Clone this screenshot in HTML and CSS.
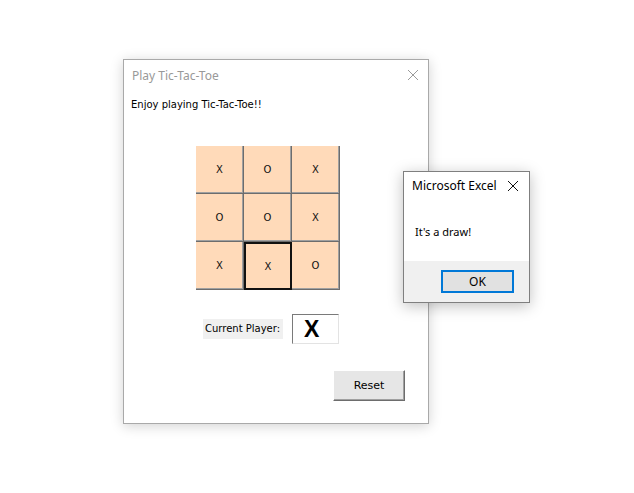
FILE: index.html
```html
<!DOCTYPE html>
<html>
<head>
  <title>Play Tic-Tac-Toe</title>
  <link rel="stylesheet" href="styles.css">
</head>
<body>

  <div class="desktop">

    <div class="window game">
      <div class="titlebar">
        <span class="title">Play Tic-Tac-Toe</span>
        <svg class="close" width="12" height="12" viewBox="0 0 12 12">
          <path d="M1 1 L11 11 M11 1 L1 11" stroke="#9a9a9a" stroke-width="1" fill="none"/>
        </svg>
      </div>

      <div class="content">
        <p class="intro">Enjoy playing Tic-Tac-Toe!!</p>

        <div class="board">
          <div class="cell">X</div>
          <div class="cell">O</div>
          <div class="cell">X</div>
          <div class="cell">O</div>
          <div class="cell">O</div>
          <div class="cell">X</div>
          <div class="cell">X</div>
          <div class="cell focused">X</div>
          <div class="cell">O</div>
        </div>

        <div class="player-row">
          <span class="player-label">Current Player:</span>
          <span class="player-box">X</span>
        </div>

        <div class="actions">
          <button class="btn-reset">Reset</button>
        </div>
      </div>
    </div>

    <div class="window msgbox">
      <div class="titlebar">
        <span class="title">Microsoft Excel</span>
        <svg class="close" width="12" height="12" viewBox="0 0 12 12">
          <path d="M1 1 L11 11 M11 1 L1 11" stroke="#111" stroke-width="1" fill="none"/>
        </svg>
      </div>
      <div class="msg-text">It's a draw!</div>
      <div class="msg-footer">
        <button class="btn-ok">OK</button>
      </div>
    </div>

  </div>

</body>
</html>
```

FILE: styles.css
```css
body {
  margin: 0;
  background: #fff;
  font-family: "Noto Sans", "Open Sans", sans-serif;
}

.desktop {
  position: relative;
  width: 634px;
  height: 493px;
  overflow: hidden;
}

.window {
  position: absolute;
  box-sizing: border-box;
  background: #fff;
  box-shadow: 0 2px 12px rgba(0,0,0,0.18);
}

/* main user form */

.game {
  left: 123px;
  top: 59px;
  width: 306px;
  height: 365px;
  border: 1px solid #a9a9a9;
}

.titlebar {
  display: flex;
  align-items: center;
  justify-content: space-between;
}

.game .titlebar {
  height: 30px;
  padding: 0 9px 0 8px;
}

.game .title {
  font-size: 12px;
  color: #999;
}

.content {
  padding-left: 7px;
}

.intro {
  margin: 8px 0 0;
  font-family: "DejaVu Sans", sans-serif;
  font-size: 10px;
  line-height: 14px;
  color: #000;
}

.board {
  display: grid;
  grid-template-columns: repeat(3, 48px);
  grid-template-rows: repeat(3, 48px);
  margin: 34px 0 0 65px;
  width: 144px;
}

.cell {
  box-sizing: border-box;
  display: flex;
  align-items: center;
  justify-content: center;
  background: #ffdab9;
  border-right: 1px solid #6d6d6d;
  border-bottom: 1px solid #6d6d6d;
  box-shadow: inset -1px -1px 0 #a0a0a0;
  font-family: "DejaVu Sans", sans-serif;
  font-size: 10px;
  color: #111;
}

.cell.focused {
  border: 2px solid #111;
  box-shadow: none;
}

.player-row {
  display: flex;
  align-items: center;
  margin: 24px 0 0 72px;
}

.player-label {
  background: #f0f0f0;
  padding: 3px 2px;
  width: 80px;
  box-sizing: border-box;
  font-family: "DejaVu Sans", sans-serif;
  font-size: 10px;
  line-height: 14px;
  color: #000;
}

.player-box {
  box-sizing: border-box;
  width: 47px;
  height: 30px;
  margin-left: 9px;
  padding: 2px 0 0 11px;
  border: 1px solid;
  border-color: #7a7a7a #e3e3e3 #e3e3e3 #7a7a7a;
  font-family: "Liberation Sans", Arial, sans-serif;
  font-weight: bold;
  font-size: 23px;
  line-height: 24px;
  color: #000;
}

.actions {
  display: flex;
  justify-content: flex-end;
  padding-right: 23px;
  margin-top: 26px;
}

.btn-reset {
  width: 72px;
  height: 31px;
  background: #e6e6e6;
  border: 1px solid;
  border-color: #fff #6d6d6d #6d6d6d #fff;
  box-shadow: inset -1px -1px 0 #a0a0a0;
  font-family: "DejaVu Sans", sans-serif;
  font-size: 11px;
  color: #000;
  padding: 0;
}

/* message box */

.msgbox {
  left: 403px;
  top: 171px;
  width: 127px;
  height: 132px;
  border: 1px solid #7f7f7f;
  display: flex;
  flex-direction: column;
  box-shadow: 0 3px 14px rgba(0,0,0,0.25);
}

.msgbox .titlebar {
  height: 27px;
  padding: 0 10px 0 8px;
}

.msgbox .title {
  font-size: 12px;
  color: #000;
}

.msg-text {
  flex: 1;
  padding: 25px 0 0 11px;
  font-size: 11px;
  color: #000;
}

.msg-footer {
  height: 41px;
  background: #f0f0f0;
  display: flex;
  align-items: center;
  justify-content: flex-end;
  padding-right: 15px;
}

.btn-ok {
  width: 73px;
  height: 23px;
  background: #e1e1e1;
  border: 2px solid #0078d7;
  font-family: "Noto Sans", sans-serif;
  font-size: 12px;
  color: #000;
  padding: 0;
}
```
